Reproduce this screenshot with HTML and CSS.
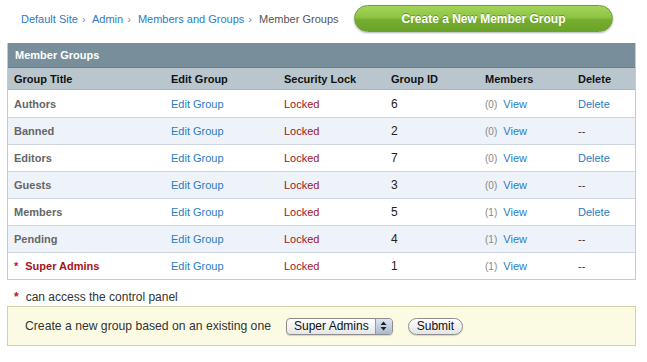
FILE: index.html
```html
<!DOCTYPE html>
<html>
<head>
<meta charset="utf-8">
<link rel="stylesheet" href="styles.css">
</head>
<body>
<div class="page">
  <div class="topbar">
    <nav class="crumbs">
      <a href="#">Default Site</a><span class="sep">›</span>
      <a href="#">Admin</a><span class="sep">›</span>
      <a href="#">Members and Groups</a><span class="sep">›</span>
      <span class="current">Member Groups</span>
    </nav>
    <a class="create-btn" href="#">Create a New Member Group</a>
  </div>

  <div class="panel">
    <div class="panel-title">Member Groups</div>
    <table class="groups">
      <colgroup>
        <col class="c1"><col class="c2"><col class="c3"><col class="c4"><col class="c5"><col class="c6">
      </colgroup>
      <thead>
        <tr><th>Group Title</th><th>Edit Group</th><th>Security Lock</th><th>Group ID</th><th>Members</th><th>Delete</th></tr>
      </thead>
      <tbody>
        <tr><td class="title">Authors</td><td><a href="#">Edit Group</a></td><td class="locked">Locked</td><td class="gid">6</td><td><span class="count">(0)</span> <a href="#">View</a></td><td><a href="#">Delete</a></td></tr>
        <tr class="alt"><td class="title">Banned</td><td><a href="#">Edit Group</a></td><td class="locked">Locked</td><td class="gid">2</td><td><span class="count">(0)</span> <a href="#">View</a></td><td>--</td></tr>
        <tr><td class="title">Editors</td><td><a href="#">Edit Group</a></td><td class="locked">Locked</td><td class="gid">7</td><td><span class="count">(0)</span> <a href="#">View</a></td><td><a href="#">Delete</a></td></tr>
        <tr class="alt"><td class="title">Guests</td><td><a href="#">Edit Group</a></td><td class="locked">Locked</td><td class="gid">3</td><td><span class="count">(0)</span> <a href="#">View</a></td><td>--</td></tr>
        <tr><td class="title">Members</td><td><a href="#">Edit Group</a></td><td class="locked">Locked</td><td class="gid">5</td><td><span class="count">(1)</span> <a href="#">View</a></td><td><a href="#">Delete</a></td></tr>
        <tr class="alt"><td class="title">Pending</td><td><a href="#">Edit Group</a></td><td class="locked">Locked</td><td class="gid">4</td><td><span class="count">(1)</span> <a href="#">View</a></td><td>--</td></tr>
        <tr><td class="title super"><span class="star">*</span>Super Admins</td><td><a href="#">Edit Group</a></td><td class="locked">Locked</td><td class="gid">1</td><td><span class="count">(1)</span> <a href="#">View</a></td><td>--</td></tr>
      </tbody>
    </table>
  </div>

  <p class="note"><span class="star">*</span>can access the control panel</p>

  <form class="copy-box">
    <span class="copy-label">Create a new group based on an existing one</span>
    <span class="select">Super Admins<span class="arrows"><svg width="7" height="10" viewBox="0 0 7 10"><path d="M3.5 0.5 L6.5 4 L0.5 4 Z M3.5 9.5 L6.5 6 L0.5 6 Z" fill="#222"/></svg></span></span>
    <span class="submit">Submit</span>
  </form>
</div>
</body>
</html>
```
FILE: styles.css
```css
html, body {
  margin: 0;
  padding: 0;
  background: #ffffff;
}
body {
  font-family: "Liberation Sans", Arial, Helvetica, sans-serif;
  font-size: 11px;
  color: #333;
}
a {
  color: #2b7bc4;
  text-decoration: none;
}
.page {
  width: 629px;
  padding: 5px 0 0 7px;
}
.topbar {
  display: flex;
  align-items: center;
  height: 27px;
}
.crumbs {
  padding-left: 14px;
  font-size: 11px;
  color: #555;
  width: 333px;
  white-space: nowrap;
  padding-top: 1px;
}
.crumbs .sep {
  color: #888;
  margin: 0 4px;
  font-size: 11px;
}
.crumbs .current {
  color: #555;
}
.create-btn {
  display: block;
  width: 259px;
  height: 27px;
  line-height: 26px;
  box-sizing: border-box;
  border-radius: 14px;
  text-align: center;
  color: #fff;
  font-weight: bold;
  font-size: 12px;
  background: linear-gradient(#a3d45a 0%, #8fc443 45%, #76ad30 55%, #6ba42a 100%);
  border: 1px solid #6f9e35;
  box-shadow: 0 1px 2px rgba(0,0,0,0.3);
  text-shadow: 0 -1px 0 rgba(60,100,20,0.5);
}
.panel {
  margin-top: 11px;
  border: 1px solid #c3cad6;
  border-top: none;
}
.panel-title {
  background: #788e9b;
  color: #fff;
  font-weight: bold;
  height: 24px;
  line-height: 25px;
  padding-left: 7px;
  border-bottom: 1px solid #6b7f8b;
}
.groups {
  width: 100%;
  border-collapse: collapse;
  table-layout: fixed;
}
.c1 { width: 157px; }
.c2 { width: 113px; }
.c3 { width: 107px; }
.c4 { width: 94px; }
.c5 { width: 93px; }
.c6 { width: auto; }
.groups th {
  background: #b9c6cd;
  color: #111;
  font-weight: bold;
  text-align: left;
  height: 21px;
  padding: 0 0 0 6px;
  border-bottom: 1px solid #a9b6be;
}
.groups td {
  height: 26px;
  padding: 0 0 0 6px;
  border-top: 1px solid #ccd4e4;
  white-space: nowrap;
}
.groups tbody tr:first-child td {
  border-top: none;
  height: 27px;
}
.groups tr.alt td {
  background: #eef3fa;
}
.title {
  font-weight: bold;
  color: #666;
}
.title.super {
  color: #a3141a;
}
.star {
  color: #c0141a;
  font-weight: bold;
  margin-right: 7px;
}
.locked {
  color: #a3141a;
}
.gid {
  color: #222;
  font-size: 12px;
}
.count {
  color: #888;
  font-size: 10px;
  margin-right: 3px;
}
.note {
  margin: 10px 0 0 7px;
  font-size: 12px;
  color: #333;
}
.note .star {
  margin-right: 7px;
}
.copy-box {
  margin: 2px 0 0 0;
  height: 38px;
  background: #fbfbe4;
  border: 1px solid #d4d2a6;
  display: flex;
  align-items: center;
  padding-left: 17px;
  font-size: 12.2px;
  color: #333;
}
.copy-label {
  margin-right: 15px;
}
.select {
  display: flex;
  align-items: center;
  box-sizing: border-box;
  width: 107px;
  height: 17px;
  padding-left: 7px;
  border: 1px solid #8d8d8d;
  border-radius: 4px;
  background: linear-gradient(#ffffff, #e6e6e6);
  color: #111;
  font-size: 12px;
  position: relative;
  box-shadow: 0 1px 1px rgba(0,0,0,0.15);
}
.arrows {
  position: absolute;
  right: 0;
  top: 0;
  bottom: 0;
  width: 16px;
  border-left: 1px solid #999;
  border-radius: 0 3px 3px 0;
  background: linear-gradient(#dbe5f2, #a9bad0);
  display: flex;
  align-items: center;
  justify-content: center;
}
.submit {
  margin-left: 15px;
  box-sizing: border-box;
  width: 55px;
  height: 17px;
  line-height: 15px;
  text-align: center;
  border: 1px solid #8d8d8d;
  border-radius: 9px;
  background: linear-gradient(#ffffff, #e4e4e4);
  color: #111;
  font-size: 12px;
  box-shadow: 0 1px 1px rgba(0,0,0,0.15);
}
```
